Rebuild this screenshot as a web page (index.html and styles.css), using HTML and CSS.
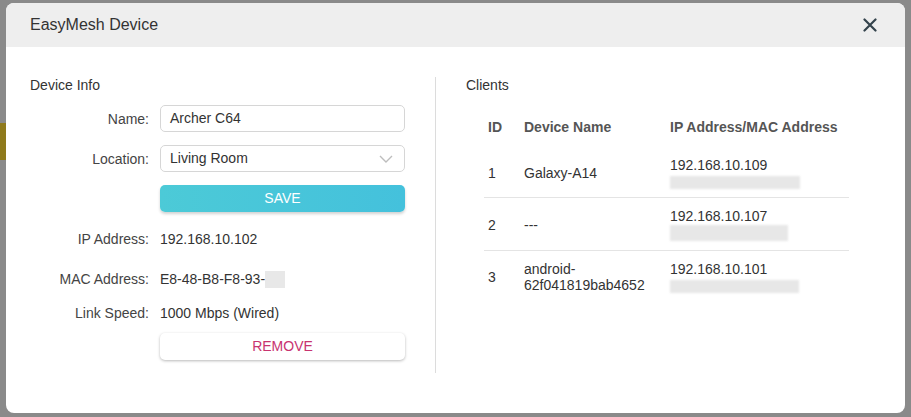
FILE: index.html
```html
<!DOCTYPE html>
<html>
<head>
<meta charset="utf-8">
<link rel="stylesheet" href="styles.css">
</head>
<body>
<div class="backdrop-strip"></div>
<div class="dialog">
  <div class="dialog-header">
    <span class="dialog-title">EasyMesh Device</span>
    <svg class="close" width="14" height="14" viewBox="0 0 14 14"><path d="M1.5 1.5 L12.5 12.5 M12.5 1.5 L1.5 12.5" stroke="#34434c" stroke-width="2.2" stroke-linecap="round" fill="none"/></svg>
  </div>
  <div class="dialog-body">
    <div class="col-left">
      <div class="section-title">Device Info</div>
      <div class="form">
        <div class="row field-row">
          <label class="lbl">Name:</label>
          <div class="input">Archer C64</div>
        </div>
        <div class="row field-row gap13">
          <label class="lbl">Location:</label>
          <div class="input select">Living Room
            <svg class="chev" width="14" height="8" viewBox="0 0 14 8"><path d="M1 1 L7 7 L13 1" stroke="#bdbdbd" stroke-width="1.4" fill="none"/></svg>
          </div>
        </div>
        <div class="row field-row gap13">
          <span></span>
          <div class="btn btn-save">SAVE</div>
        </div>
        <div class="row info-row ip-row">
          <span class="lbl">IP Address:</span>
          <span class="val">192.168.10.102</span>
        </div>
        <div class="row info-row mac-row">
          <span class="lbl">MAC Address:</span>
          <span class="val">E8-48-B8-F8-93-<span class="mask-small"></span></span>
        </div>
        <div class="row info-row speed-row">
          <span class="lbl">Link Speed:</span>
          <span class="val">1000 Mbps (Wired)</span>
        </div>
        <div class="row field-row remove-row">
          <span></span>
          <div class="btn btn-remove">REMOVE</div>
        </div>
      </div>
    </div>
    <div class="col-right">
      <div class="section-title">Clients</div>
      <table class="clients">
        <thead>
          <tr><th class="c-id">ID</th><th class="c-name">Device Name</th><th class="c-ip">IP Address/MAC Address</th></tr>
        </thead>
        <tbody>
          <tr class="sep r1">
            <td>1</td><td>Galaxy-A14</td>
            <td><div class="ip">192.168.10.109</div><div class="blur" style="width:130px"></div></td>
          </tr>
          <tr class="sep r2">
            <td>2</td><td>---</td>
            <td><div class="ip">192.168.10.107</div><div class="blur tall" style="width:118px"></div></td>
          </tr>
          <tr class="r3">
            <td>3</td><td><div class="ip">android-</div><div class="ip">62f041819bab4652</div></td>
            <td><div class="ip">192.168.10.101</div><div class="blur" style="width:129px"></div></td>
          </tr>
        </tbody>
      </table>
    </div>
  </div>
</div>
</body>
</html>
```

FILE: styles.css
```css
html, body {
  margin: 0;
  padding: 0;
}
body {
  background: #8a8a8a;
  font-family: "Liberation Sans", Arial, sans-serif;
  font-size: 14px;
  color: #333;
  width: 911px;
  height: 417px;
  overflow: hidden;
  position: relative;
}
.backdrop-strip {
  position: absolute;
  left: 0;
  top: 123px;
  width: 8px;
  height: 37px;
  background: #8f7a1c;
}
.dialog {
  position: relative;
  margin: 3px 0 0 6px;
  width: 899px;
  height: 410px;
  background: #fff;
  border-radius: 8px;
  overflow: hidden;
}
.dialog-header {
  height: 44px;
  background: #eeeeee;
  display: flex;
  align-items: center;
  justify-content: space-between;
  padding: 0 28px 0 24px;
}
.dialog-title {
  font-size: 16px;
  color: #333;
}
.close {
  display: block;
}
.dialog-body {
  display: flex;
  padding: 30px 0 40px 0;
}
.col-left {
  width: 405px;
  padding-left: 24px;
  border-right: 1px solid #dcdcdc;
  padding-bottom: 13px;
}
.col-right {
  padding-left: 30px;
}
.section-title {
  line-height: 16px;
  height: 16px;
  color: #333;
}
.form {
  margin-top: 12px;
}
.row {
  display: grid;
  grid-template-columns: 119px 245px;
  column-gap: 11px;
  align-items: center;
}
.lbl {
  text-align: right;
  color: #444;
}
.gap13 {
  margin-top: 13px;
}
.input {
  height: 25px;
  border: 1px solid #d6d6d6;
  border-radius: 5px;
  padding: 0 9px;
  line-height: 25px;
  color: #333;
  position: relative;
}
.chev {
  position: absolute;
  right: 11px;
  top: 9px;
}
.btn {
  height: 27px;
  line-height: 27px;
  border-radius: 5px;
  text-align: center;
}
.btn-save {
  background: linear-gradient(90deg, #4ccad7, #44c1dc);
  color: #fff;
  box-shadow: 0 2px 3px rgba(0,0,0,0.18);
}
.btn-remove {
  background: #fff;
  color: #c8336f;
  box-shadow: 0 1px 3px rgba(0,0,0,0.28);
}
.info-row {
  height: 20px;
  line-height: 20px;
}
.val {
  color: #333;
}
.ip-row { margin-top: 17px; }
.mac-row { margin-top: 20px; }
.speed-row { margin-top: 14px; }
.remove-row { margin-top: 10px; }
.mask-small {
  display: inline-block;
  width: 20px;
  height: 17px;
  background: #e8e8e8;
  vertical-align: -4px;
}
.clients {
  margin-top: 13px;
  margin-left: 18px;
  width: 365px;
  border-collapse: collapse;
}
.clients th {
  text-align: left;
  font-weight: bold;
  color: #555;
  height: 42px;
  padding: 0 0 0 4px;
}
.c-id { width: 32px; }
.c-name { width: 142px; }
.clients td {
  padding: 9px 0 8px 4px;
  vertical-align: middle;
  color: #333;
}
.clients tr.sep td {
  border-bottom: 1px solid #e4e4e4;
}
.clients tr.r2 td {
  padding: 10px 0 9px 4px;
}
.clients tr.r3 td {
  padding: 10px 0 9px 4px;
}
.ip {
  line-height: 16px;
}
.blur {
  height: 13px;
  margin-top: 3px;
  background: #e7e7e7;
  filter: blur(1.2px);
}
.blur.tall {
  height: 16px;
  margin-top: 1px;
}
```
